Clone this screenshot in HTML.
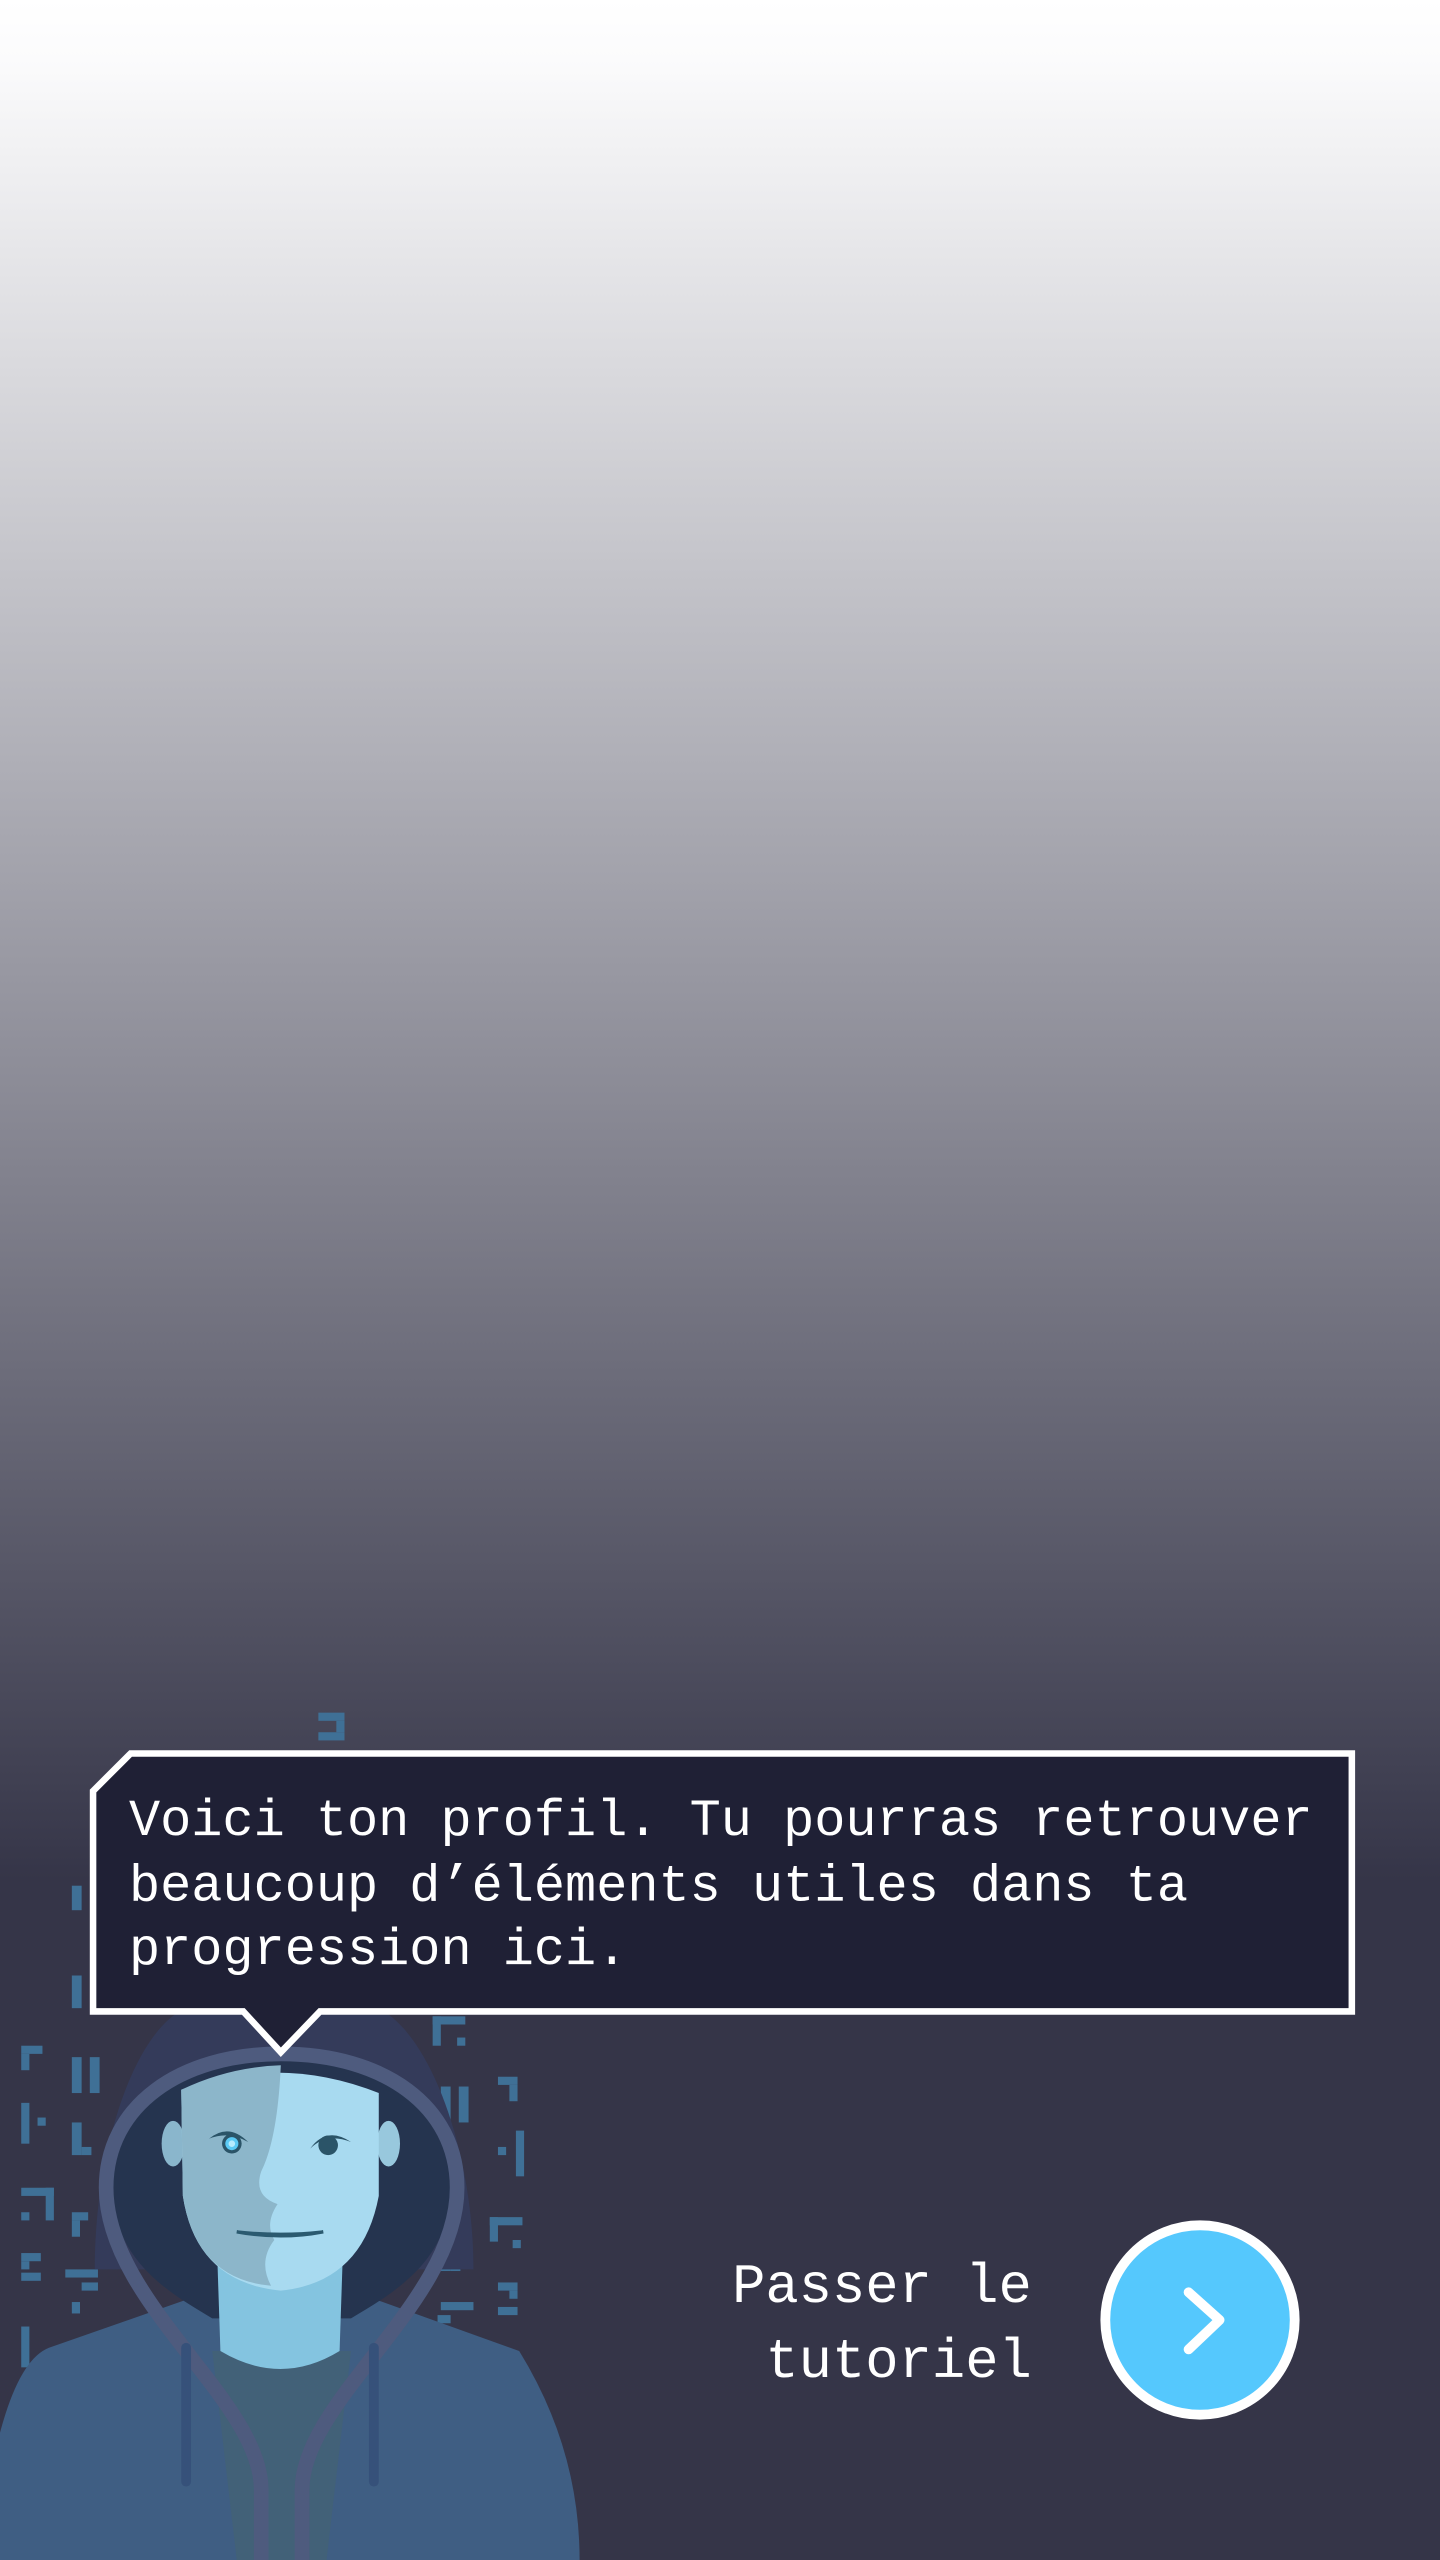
<!DOCTYPE html>
<html><head><meta charset="utf-8"><style>
html,body{margin:0;padding:0;}
body{width:1440px;height:2560px;overflow:hidden;background:linear-gradient(to bottom,#ffffff 0px,#fbfbfc 60px,#353548 1880px,#353548 2560px);}
svg{position:absolute;left:0;top:0;}
</style></head><body>
<svg width="1440" height="2560" viewBox="0 0 882 1568" xmlns="http://www.w3.org/2000/svg">
<g fill="#3f7096">
<rect x="195" y="1049" width="16" height="5"/><rect x="206" y="1054" width="5" height="7"/><rect x="195" y="1061" width="16" height="5"/>
<rect x="44" y="1155" width="6" height="15"/><rect x="44" y="1210" width="6" height="20"/>
<rect x="13" y="1253" width="13" height="5"/><rect x="13" y="1258" width="5" height="10"/>
<rect x="44" y="1260" width="6" height="22"/><rect x="55" y="1260" width="6" height="22"/>
<rect x="13" y="1288" width="5" height="25"/><rect x="23" y="1297" width="5" height="5"/>
<rect x="44" y="1300" width="6" height="20"/><rect x="50" y="1315" width="6" height="5"/>
<rect x="13" y="1340" width="20" height="5"/><rect x="28" y="1340" width="5" height="20"/><rect x="13" y="1355" width="5" height="5"/>
<rect x="44" y="1355" width="10" height="5"/><rect x="44" y="1360" width="5" height="10"/>
<rect x="13" y="1380" width="12" height="5"/><rect x="13" y="1385" width="5" height="5"/><rect x="13" y="1392" width="12" height="5"/>
<rect x="40" y="1390" width="20" height="5"/><rect x="50" y="1398" width="10" height="5"/><rect x="44" y="1410" width="5" height="7"/>
<rect x="13" y="1425" width="5" height="25"/>
<rect x="265" y="1235" width="5" height="18"/><rect x="265" y="1235" width="20" height="5"/><rect x="280" y="1248" width="5" height="5"/>
<rect x="270" y="1278" width="6" height="22"/><rect x="281" y="1278" width="6" height="22"/>
<rect x="305" y="1272" width="12" height="5"/><rect x="312" y="1277" width="5" height="10"/>
<rect x="316" y="1305" width="5" height="28"/><rect x="305" y="1315" width="5" height="5"/>
<rect x="300" y="1358" width="20" height="5"/><rect x="300" y="1358" width="5" height="15"/><rect x="314" y="1372" width="5" height="5"/>
<rect x="270" y="1375" width="6" height="16"/><rect x="276" y="1386" width="6" height="5"/>
<rect x="305" y="1398" width="12" height="5"/><rect x="312" y="1403" width="5" height="5"/><rect x="305" y="1413" width="12" height="5"/>
<rect x="270" y="1410" width="20" height="5"/><rect x="268" y="1418" width="8" height="5"/>
</g>
<!-- hood back -->
<path d="M58,1390 C58,1320 80,1250 110,1232 L235,1232 C265,1250 290,1320 290,1390 Z" fill="#343b5a"/>
<!-- body -->
<path d="M0,1568 L0,1490 Q12,1445 30,1438 L130,1403 L215,1403 L318,1440 Q355,1500 355,1568 Z" fill="#3f5e83"/>
<!-- inner hood opening -->
<path d="M172,1262 C235,1262 276,1292 276,1340 C276,1385 240,1405 215,1420 L130,1420 C105,1405 69,1385 69,1340 C69,1292 110,1262 172,1262 Z" fill="#25344f"/>
<path d="M130,1440 L215,1440 L200,1568 L145,1568 Z" fill="#426178"/>
<!-- hood rim -->
<path d="M160,1568 L160,1525 C160,1470 65,1410 65,1340 C65,1290 110,1258 172,1258 C235,1258 280,1290 280,1340 C280,1410 185,1470 185,1525 L185,1568" fill="none" stroke="#4e5b7e" stroke-width="9"/>
<!-- neck -->
<path d="M133,1380 L210,1380 L208,1440 Q172,1462 135,1440 Z" fill="#84c4e0"/>
<!-- ears -->
<ellipse cx="106" cy="1313" rx="7" ry="14" fill="#8ab6cc"/>
<ellipse cx="238" cy="1313" rx="7" ry="14" fill="#98c8dd"/>
<!-- face -->
<path d="M111,1280 Q172,1258 232,1282 L232,1345 Q222,1398 172,1403 Q120,1398 112,1345 Z" fill="#a8daf0"/>
<path d="M111,1280 Q140,1266 172,1265 Q170,1310 160,1330 Q155,1345 170,1350 Q162,1362 168,1372 Q158,1385 166,1400 Q120,1396 112,1345 Z" fill="#8cb6ca"/>
<!-- eyes -->
<path d="M128,1310 Q140,1300 152,1312 Q140,1305 128,1310Z" fill="#2b5468"/>
<circle cx="142" cy="1313" r="6" fill="#2b5468"/><circle cx="142" cy="1313" r="4" fill="#5bcaf5"/><circle cx="142" cy="1313" r="2" fill="#b6ecff"/>
<path d="M190,1316 Q200,1302 215,1312 Q200,1306 190,1316Z" fill="#2b5468"/>
<circle cx="201" cy="1314" r="6" fill="#2b5468"/>
<path d="M145,1367 Q172,1372 198,1367 Q172,1370 145,1367Z" fill="#2b5a70" stroke="#2b5a70" stroke-width="2"/>
<!-- drawstrings -->
<line x1="114" y1="1438" x2="114" y2="1520" stroke="#36517a" stroke-width="6" stroke-linecap="round"/>
<line x1="229" y1="1438" x2="229" y2="1520" stroke="#36517a" stroke-width="6" stroke-linecap="round"/>
<!-- bubble -->
<polygon points="57,1097 80,1074 828,1074 828,1232 196,1232 172,1257 149,1232 57,1232" fill="#1f2035" stroke="#ffffff" stroke-width="4"/>
<g font-family="Liberation Mono, monospace" font-size="31.8" fill="#ffffff">
<text x="79" y="1124">Voici ton profil. Tu pourras retrouver</text>
<text x="79" y="1164">beaucoup d’éléments utiles dans ta</text>
<text x="79" y="1203">progression ici.</text>
</g>
<g font-family="Liberation Mono, monospace" font-size="34" fill="#ffffff" text-anchor="end">
<text x="632" y="1410">Passer le</text>
<text x="632" y="1456">tutoriel</text>
</g>
<circle cx="735" cy="1421" r="58" fill="#55c8fd" stroke="#ffffff" stroke-width="6"/>
<path d="M728,1404 L747,1421 L728,1439" fill="none" stroke="#ffffff" stroke-width="6" stroke-linecap="round" stroke-linejoin="round"/>
</svg>
</body></html>
